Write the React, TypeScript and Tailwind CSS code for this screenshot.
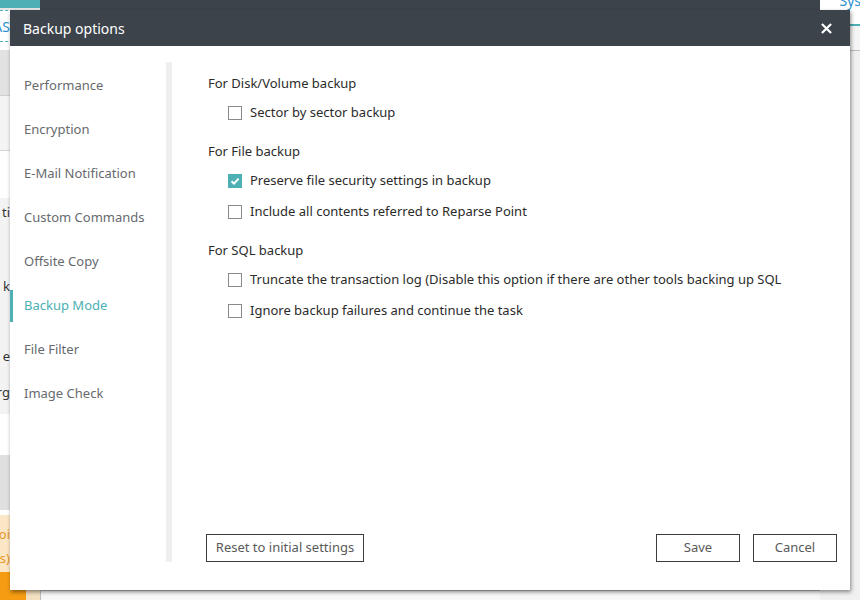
const menu = [
  "Performance",
  "Encryption",
  "E-Mail Notification",
  "Custom Commands",
  "Offsite Copy",
  "Backup Mode",
  "File Filter",
  "Image Check",
];

function Check({ on }: { on?: boolean }) {
  if (on)
    return (
      <span className="flex h-[14px] w-[14px] items-center justify-center bg-[#4cb0b4]">
        <svg viewBox="0 0 14 14" className="h-[14px] w-[14px]" fill="none" stroke="white" strokeWidth="2">
          <path d="M3.5 7.2 6 9.6l4.6-5" />
        </svg>
      </span>
    );
  return <span className="h-[14px] w-[14px] border border-[#8a8a8a] bg-white" />;
}

function Option({ label, on, mt }: { label: string; on?: boolean; mt: string }) {
  return (
    <div className={`flex h-[20px] items-center gap-[8px] pl-[22px] ${mt}`}>
      <Check on={on} />
      <span className="text-[#2b2b2b]">{label}</span>
    </div>
  );
}

function Heading({ text, mt }: { text: string; mt?: string }) {
  return <div className={`flex h-[20px] items-center pl-[2px] text-[#2b2b2b] ${mt ?? ""}`}>{text}</div>;
}

// bits of the main window that peek out around the dialog
function LeftStrip() {
  const frag = "flex items-center justify-end pr-[30px] text-[13px] text-[#333]";
  return (
    <div className="flex w-[40px] flex-col">
      <div className="h-[8px] bg-[#4cb0b4]" />
      <div className="h-[2px] bg-[#e6e6e6]" />
      <div className="flex h-[32px] items-center justify-end border-y border-dashed border-[#4cb0b4] bg-white pr-[30px] text-[14px] text-[#2a8fd0]">
        AS
      </div>
      <div className="h-[8px] bg-white" />
      <div className="h-[45px] bg-[#e2e2e2]" />
      <div className="h-[55px] border-t border-[#cfcfcf] bg-[#f4f4f4]" />
      <div className="h-[48px] border-t border-[#d4d4d4] bg-white" />
      <div className={`h-[30px] ${frag}`}>ti</div>
      <div className="h-[44px]" />
      <div className={`h-[30px] ${frag}`}>k</div>
      <div className="h-[40px]" />
      <div className={`h-[30px] ${frag}`}>e</div>
      <div className={`h-[42px] ${frag}`}>rg</div>
      <div className="h-[41px] bg-white" />
      <div className="h-[55px] bg-[#e0e0e0]" />
      <div className="h-[5px] bg-white" />
      <div className="flex h-[57px] flex-col justify-around bg-[#fbe6c6] pb-[2px] pt-[8px] text-[13px] text-[#e8961e]">
        <div className="flex justify-end pr-[30px]">oi</div>
        <div className="flex justify-end pr-[30px]">s)</div>
      </div>
      <div className="flex flex-1">
        <div className="w-[26px] bg-[#f59c12]" />
        <div className="flex-1 bg-[#f3e0c0]" />
      </div>
    </div>
  );
}

function RightStrip() {
  return (
    <div className="flex w-[40px] flex-col bg-[#eeeeee]">
      <div className="flex h-[24px] items-start justify-end bg-white text-[14px] leading-none text-[#2a8fd0]">
        <span className="-mt-[6px] mr-[-1px]">Sys</span>
      </div>
      <div className="h-[2px] bg-[#4cb0b4]" />
      <div className="h-[24px] bg-[#f5f5f5]" />
      <div className="h-[1px] bg-[#bdbdbd]" />
      <div className="flex-1 bg-[#f0f0f0]" />
    </div>
  );
}

export default function App() {
  return (
    <div
      className="relative h-[600px] w-[860px] overflow-hidden bg-[#f3f3f3] text-[13px]"
      style={{ fontFamily: '"Noto Sans", "Open Sans", sans-serif' }}
    >
      <div className="flex h-full">
        <LeftStrip />
        <div className="flex flex-1 flex-col">
          <div className="h-[10px] bg-[#3c434b]" />
          <div className="flex-1 bg-white" />
          <div className="h-[10px] border-l border-t border-[#bdbdbd] bg-[#f7f7f7]" />
        </div>
        <RightStrip />
      </div>

      {/* dialog */}
      <div className="absolute left-[10px] top-[10px] flex h-[580px] w-[840px] flex-col bg-white shadow-[1px_2px_4px_rgba(0,0,0,0.45)]">
        <div className="flex h-[36px] items-center justify-between bg-[#3c434b] pl-[13px] pr-[18px]">
          <span className="text-[14px] text-white">Backup options</span>
          <svg viewBox="0 0 12 12" className="h-[11px] w-[11px]" stroke="white" strokeWidth="2.4">
            <path d="M1 1l10 10M11 1 1 11" />
          </svg>
        </div>

        <div className="flex flex-1">
          <div className="w-[156px] pt-[18px]">
            {menu.map((m) => {
              const active = m === "Backup Mode";
              return (
                <div
                  key={m}
                  className={`flex h-[44px] items-center pl-[14px] ${active ? "py-[6px]" : ""}`}
                >
                  <div
                    className={`flex h-full items-center ${
                      active ? "-ml-[14px] border-l-[3px] border-[#4cb0b4] pl-[11px] text-[#4cb0b4]" : "text-[#666a6e]"
                    }`}
                  >
                    {m}
                  </div>
                </div>
              );
            })}
          </div>
          <div className="mb-[28px] mt-[16px] w-[6px] bg-[#efefef]" />

          <div className="flex flex-1 flex-col pb-[28px] pl-[34px] pr-[13px] pt-[28px]">
            <Heading text="For Disk/Volume backup" />
            <Option label="Sector by sector backup" mt="mt-[9px]" />
            <Heading text="For File backup" mt="mt-[19px]" />
            <Option label="Preserve file security settings in backup" on mt="mt-[9px]" />
            <Option label="Include all contents referred to Reparse Point" mt="mt-[11px]" />
            <Heading text="For SQL backup" mt="mt-[19px]" />
            <Option
              label="Truncate the transaction log (Disable this option if there are other tools backing up SQL"
              mt="mt-[9px]"
            />
            <Option label="Ignore backup failures and continue the task" mt="mt-[11px]" />

            <div className="mt-auto flex items-center">
              <button className="h-[28px] w-[158px] border border-[#3c3c3c] text-[#5a5a5a]">Reset to initial settings</button>
              <div className="ml-auto flex gap-[13px]">
                <button className="h-[28px] w-[84px] border border-[#3c3c3c] text-[#5a5a5a]">Save</button>
                <button className="h-[28px] w-[84px] border border-[#3c3c3c] text-[#5a5a5a]">Cancel</button>
              </div>
            </div>
          </div>
        </div>
      </div>
    </div>
  );
}
